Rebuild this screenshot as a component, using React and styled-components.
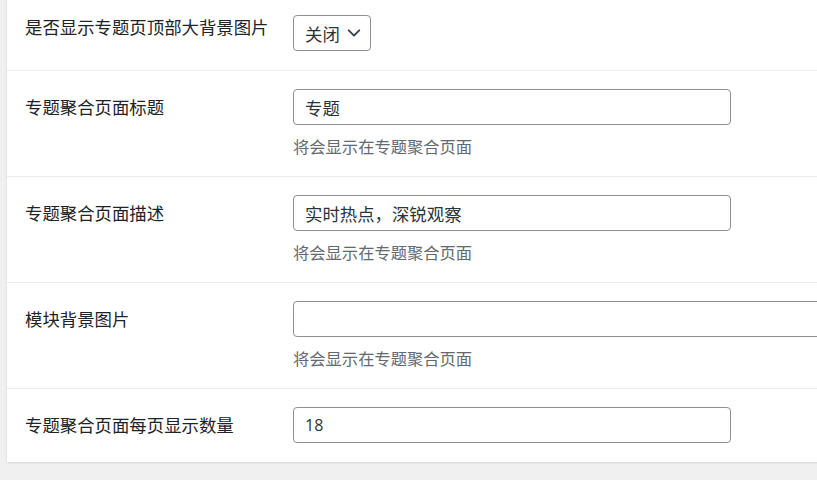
import React from 'react';
import styled, { createGlobalStyle } from 'styled-components';

const GlobalStyle = createGlobalStyle`
  html, body {
    margin: 0;
    padding: 0;
    background: #f0f0f1;
    overflow: hidden;
  }
  body {
    font-family: "Noto Sans CJK SC", "Noto Sans", sans-serif;
    color: #1d2327;
  }
`;

const Page = styled.div`
  width: 817px;
  height: 480px;
  overflow: hidden;
`;

const Panel = styled.div`
  margin: -3px 0 0 7px;
  width: 830px;
  background: #fff;
  box-shadow: 0 1px 2px rgba(0, 0, 0, 0.12);
`;

const Row = styled.div`
  display: grid;
  grid-template-columns: 268px 1fr;
  padding-left: 18px;
  border-bottom: 1px solid #ebebeb;

  &:last-child {
    border-bottom: none;
  }
`;

const Label = styled.div`
  padding-top: ${(p) => p.$top || 24}px;
  font-size: 17.4px;
  line-height: 23px;
  color: #1d2327;
`;

const Field = styled.div`
  padding: 18px 0 19px;
`;

const TextInput = styled.div`
  box-sizing: border-box;
  width: ${(p) => p.$width || 438}px;
  height: 36px;
  border: 1px solid #8c8f94;
  border-radius: 4px;
  padding: 0 11px;
  display: flex;
  align-items: center;
  font-size: 17.4px;
  color: #2c3338;
`;

const Number = styled.span`
  font-family: "Open Sans", "Noto Sans", sans-serif;
  font-size: 16px;
`;

const Select = styled.div`
  box-sizing: border-box;
  width: 78px;
  height: 36px;
  border: 1px solid #8c8f94;
  border-radius: 4px;
  padding: 0 9px 0 11px;
  display: flex;
  align-items: center;
  justify-content: space-between;
  font-size: 17.4px;
  color: #2c3338;
`;

const Description = styled.div`
  margin-top: 10px;
  font-size: 16.3px;
  line-height: 22px;
  color: #646970;
`;

const Chevron = () => (
  <svg width="14" height="14" viewBox="0 0 16 16">
    <path d="M2 5 L8 11 L14 5" fill="none" stroke="#3c434a" strokeWidth="2.2" strokeLinecap="round" strokeLinejoin="round" />
  </svg>
);

const hint = '将会显示在专题聚合页面';

const App = () => (
  <Page>
    <GlobalStyle />
    <Panel>
      <Row>
        <Label $top={18}>是否显示专题页顶部大背景图片</Label>
        <Field>
          <Select>关闭<Chevron /></Select>
        </Field>
      </Row>
      <Row>
        <Label>专题聚合页面标题</Label>
        <Field>
          <TextInput>专题</TextInput>
          <Description>{hint}</Description>
        </Field>
      </Row>
      <Row>
        <Label>专题聚合页面描述</Label>
        <Field>
          <TextInput>实时热点，深锐观察</TextInput>
          <Description>{hint}</Description>
        </Field>
      </Row>
      <Row>
        <Label>模块背景图片</Label>
        <Field>
          <TextInput $width={600} />
          <Description>{hint}</Description>
        </Field>
      </Row>
      <Row>
        <Label>专题聚合页面每页显示数量</Label>
        <Field>
          <TextInput><Number>18</Number></TextInput>
        </Field>
      </Row>
    </Panel>
  </Page>
);

export default App;
